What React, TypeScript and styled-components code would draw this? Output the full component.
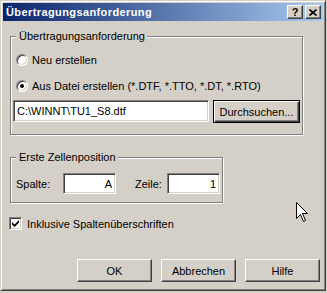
import styled, { createGlobalStyle } from "styled-components";

const GlobalStyle = createGlobalStyle`
  body {
    margin: 0;
    background: #d4d0c8;
    font-family: "Liberation Sans", Arial, sans-serif;
    font-size: 11px;
    color: #000;
  }
`;

const Window = styled.div`
  position: relative;
  box-sizing: border-box;
  width: 326px;
  height: 291px;
  background: #d4d0c8;
  border: 1px solid;
  border-color: #d4d0c8 #404040 #404040 #d4d0c8;
  box-shadow: inset 1px 1px 0 #fff, inset -1px -1px 0 #808080;
  padding: 2px;
  display: flex;
  flex-direction: column;
`;

const TitleBar = styled.div`
  height: 18px;
  display: flex;
  align-items: center;
  padding: 0 2px 0 3px;
  background: linear-gradient(to right, #0a246a, #a6caf0);
`;

const Title = styled.div`
  flex: 1;
  color: #fff;
  font-weight: bold;
  font-size: 11px;
  letter-spacing: 0.4px;
`;

const CaptionButtons = styled.div`
  display: flex;
  gap: 2px;
`;

const CaptionButton = styled.div`
  box-sizing: border-box;
  width: 16px;
  height: 14px;
  background: #d4d0c8;
  border: 1px solid;
  border-color: #fff #404040 #404040 #fff;
  box-shadow: inset -1px -1px 0 #808080;
  display: flex;
  align-items: center;
  justify-content: center;
  font-weight: bold;
  font-size: 11px;
  line-height: 1;
`;

const Content = styled.div`
  display: flex;
  flex-direction: column;
  padding: 0 3px 0 6px;
`;

const Group = styled.fieldset<{ $top: number; $width: number; $bottom: number }>`
  box-sizing: border-box;
  margin: ${(p) => p.$top}px 0 0 1px;
  width: ${(p) => p.$width}px;
  min-width: 0;
  padding: 0 0 ${(p) => p.$bottom}px 0;
  border: 1px solid #808080;
  box-shadow: inset 1px 1px 0 #fff, 1px 1px 0 #fff;
`;

const Legend = styled.legend`
  margin-left: 5px;
  padding: 0 2px 0 3px;
  line-height: 13px;
  background: #d4d0c8;
`;

const OptionRow = styled.div<{ $top: number }>`
  display: flex;
  align-items: center;
  height: 12px;
  margin: ${(p) => p.$top}px 0 0 5px;
  gap: 4px;
`;

const Radio = styled.span<{ $checked?: boolean }>`
  box-sizing: border-box;
  width: 12px;
  height: 12px;
  border-radius: 50%;
  background: #fff;
  border: 1px solid;
  border-color: #808080 #fff #fff #808080;
  box-shadow: inset 1px 1px 0 #404040, inset -1px -1px 0 #d4d0c8;
  display: flex;
  align-items: center;
  justify-content: center;

  &::after {
    content: "";
    display: ${(p) => (p.$checked ? "block" : "none")};
    width: 4px;
    height: 4px;
    border-radius: 50%;
    background: #000;
  }
`;

const FileRow = styled.div`
  display: flex;
  align-items: flex-start;
  margin: 8px 0 0 2px;
  gap: 4px;
`;

const TextField = styled.div<{ $width: number; $height: number; $right?: boolean }>`
  box-sizing: border-box;
  width: ${(p) => p.$width}px;
  height: ${(p) => p.$height}px;
  background: #fff;
  border: 1px solid;
  border-color: #808080 #fff #fff #808080;
  box-shadow: inset 1px 1px 0 #404040, inset -1px -1px 0 #d4d0c8;
  display: flex;
  align-items: center;
  justify-content: ${(p) => (p.$right ? "flex-end" : "flex-start")};
  padding: 0 3px;
  white-space: nowrap;
`;

const Button = styled.div<{ $width: number; $default?: boolean }>`
  box-sizing: border-box;
  width: ${(p) => p.$width}px;
  height: 23px;
  background: #d4d0c8;
  display: flex;
  align-items: center;
  justify-content: center;
  border: 1px solid;
  border-color: ${(p) => (p.$default ? "#000" : "#fff #404040 #404040 #fff")};
  box-shadow: ${(p) =>
    p.$default
      ? "inset 1px 1px 0 #fff, inset -1px -1px 0 #404040, inset -2px -2px 0 #808080"
      : "inset -1px -1px 0 #808080"};
`;

const FieldRow = styled.div`
  display: flex;
  align-items: center;
  margin: 9px 0 0 5px;
`;

const FieldLabel = styled.span<{ $width: number; $gap?: number }>`
  width: ${(p) => p.$width}px;
  margin-left: ${(p) => p.$gap ?? 0}px;
`;

const CheckRow = styled.div`
  display: flex;
  align-items: center;
  gap: 5px;
  margin-top: 14px;
`;

const CheckBox = styled.span`
  box-sizing: border-box;
  width: 13px;
  height: 13px;
  background: #fff;
  border: 1px solid;
  border-color: #808080 #fff #fff #808080;
  box-shadow: inset 1px 1px 0 #404040, inset -1px -1px 0 #d4d0c8;
  display: flex;
  align-items: center;
  justify-content: center;
`;

const ButtonRow = styled.div`
  display: flex;
  justify-content: flex-end;
  gap: 9px;
  margin-top: 29px;
`;

const Cursor = styled.svg`
  position: absolute;
  left: 295px;
  top: 201px;
`;

export default function App() {
  return (
    <>
      <GlobalStyle />
      <Window>
        <TitleBar>
          <Title>Übertragungsanforderung</Title>
          <CaptionButtons>
            <CaptionButton>?</CaptionButton>
            <CaptionButton>
              <svg width="8" height="7" viewBox="0 0 8 7">
                <path d="M0.5 0.5 L7.5 6.5 M7.5 0.5 L0.5 6.5" stroke="#000" strokeWidth="1.6" />
              </svg>
            </CaptionButton>
          </CaptionButtons>
        </TitleBar>
        <Content>
          <Group $top={9} $width={293} $bottom={11}>
            <Legend>Übertragungsanforderung</Legend>
            <OptionRow $top={11}>
              <Radio />
              <span>Neu erstellen</span>
            </OptionRow>
            <OptionRow $top={14}>
              <Radio $checked />
              <span>Aus Datei erstellen (*.DTF, *.TTO, *.DT, *.RTO)</span>
            </OptionRow>
            <FileRow>
              <TextField $width={196} $height={22}>C:\WINNT\TU1_S8.dtf</TextField>
              <Button $width={87} $default>Durchsuchen...</Button>
            </FileRow>
          </Group>
          <Group $top={16} $width={213} $bottom={8}>
            <Legend>Erste Zellenposition</Legend>
            <FieldRow>
              <FieldLabel $width={47}>Spalte:</FieldLabel>
              <TextField $width={53} $height={21} $right>A</TextField>
              <FieldLabel $width={32} $gap={19}>Zeile:</FieldLabel>
              <TextField $width={53} $height={21} $right>1</TextField>
            </FieldRow>
          </Group>
          <CheckRow>
            <CheckBox>
              <svg width="7" height="7" viewBox="0 0 7 7">
                <path d="M0 2 L2.5 4.5 L7 0 L7 2.5 L2.5 7 L0 4.5 Z" fill="#000" />
              </svg>
            </CheckBox>
            <span>Inklusive Spaltenüberschriften</span>
          </CheckRow>
          <ButtonRow>
            <Button $width={75}>OK</Button>
            <Button $width={75}>Abbrechen</Button>
            <Button $width={75}>Hilfe</Button>
          </ButtonRow>
        </Content>
        <Cursor width="13" height="21" viewBox="0 0 13 21">
          <path
            d="M0.5 0.5 L0.5 16.5 L4.5 12.5 L7.5 19.5 L9.5 18.5 L6.5 11.5 L11.5 11.5 Z"
            fill="#fff"
            stroke="#000"
            strokeWidth="1"
          />
        </Cursor>
      </Window>
    </>
  );
}
